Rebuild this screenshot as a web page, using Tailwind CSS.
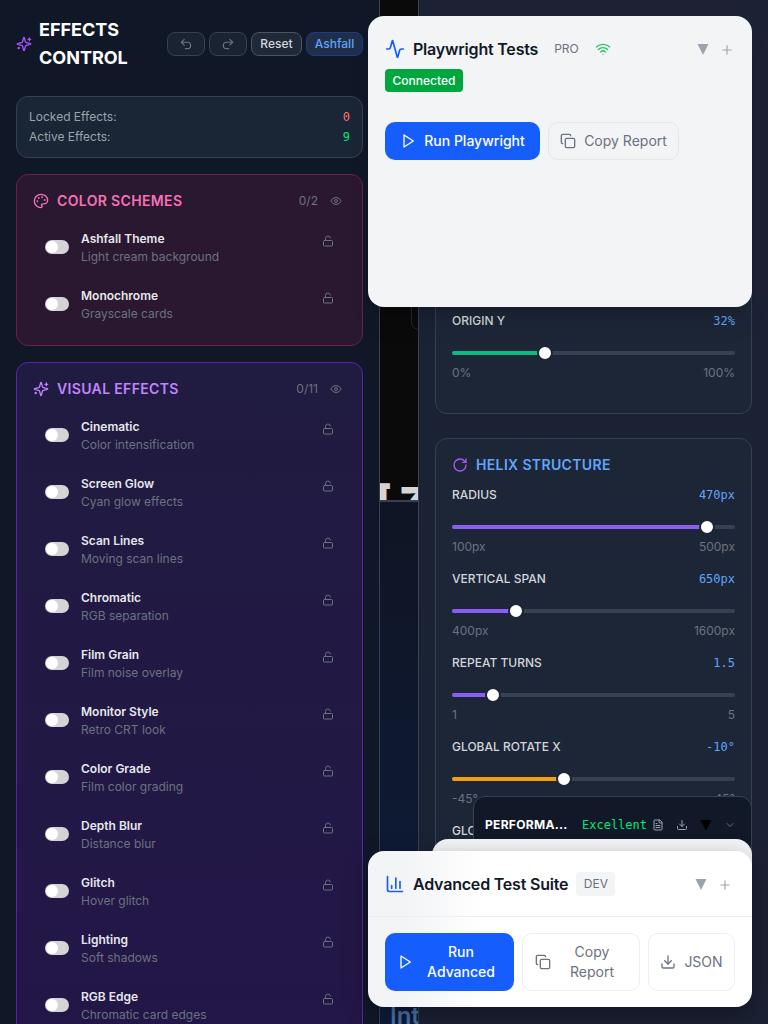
<!DOCTYPE html>
<html lang="en">
<head>
    <meta charset="UTF-8">
    <meta name="viewport" content="width=device-width, initial-scale=1.0">
    <title>Effects Control</title>
    <script src="https://cdn.jsdelivr.net/npm/@tailwindcss/browser@4"></script>
</head>
<body class="bg-[#0f172a] font-['Inter',sans-serif] antialiased">
<div class="relative flex h-[1024px] w-[768px] overflow-hidden">

    <!-- Effects sidebar -->
    <aside class="h-full w-[380px] shrink-0 overflow-hidden border-r border-[#374151] bg-[#101828] p-4 pr-4">
        <div class="mb-6 flex items-center justify-between">
            <div class="flex items-center gap-[7px]">
                <svg class="h-4 w-4 text-[#a855f7]" viewBox="0 0 24 24" fill="none" stroke="currentColor" stroke-width="2" stroke-linecap="round" stroke-linejoin="round"><path d="M9.937 15.5A2 2 0 0 0 8.5 14.063l-6.135-1.582a.5.5 0 0 1 0-.962L8.5 9.936A2 2 0 0 0 9.937 8.5l1.582-6.135a.5.5 0 0 1 .963 0L14.063 8.5A2 2 0 0 0 15.5 9.937l6.135 1.581a.5.5 0 0 1 0 .964L15.5 14.063a2 2 0 0 0-1.437 1.437l-1.582 6.135a.5.5 0 0 1-.963 0z"/><path d="M20 3v4"/><path d="M22 5h-4"/><path d="M4 17v2"/><path d="M5 18H3"/></svg>
                <h1 class="text-lg leading-7 font-bold text-white">EFFECTS<br>CONTROL</h1>
            </div>
            <div class="flex items-center gap-1">
                <button class="flex h-6 w-[38px] items-center justify-center rounded-lg border border-[#374151] bg-[#1a2332] text-[#6b7280]">
                    <svg class="h-[14px] w-[14px]" viewBox="0 0 24 24" fill="none" stroke="currentColor" stroke-width="2" stroke-linecap="round" stroke-linejoin="round"><path d="M9 14 4 9l5-5"/><path d="M4 9h10.5a5.5 5.5 0 0 1 5.5 5.5a5.5 5.5 0 0 1-5.5 5.5H11"/></svg>
                </button>
                <button class="flex h-6 w-[38px] items-center justify-center rounded-lg border border-[#374151] bg-[#1a2332] text-[#6b7280]">
                    <svg class="h-[14px] w-[14px]" viewBox="0 0 24 24" fill="none" stroke="currentColor" stroke-width="2" stroke-linecap="round" stroke-linejoin="round"><path d="m15 14 5-5-5-5"/><path d="M20 9H9.5A5.5 5.5 0 0 0 4 14.5A5.5 5.5 0 0 0 9.5 20H13"/></svg>
                </button>
                <button class="h-6 w-[51px] rounded-lg border border-[#4b5563] bg-[#1f2937] text-xs font-medium text-[#d1d5db]">Reset</button>
                <button class="h-6 w-[57px] rounded-lg border border-[#1e3a8a] bg-[#1f2f4a] text-xs font-medium text-[#60a5fa]">Ashfall</button>
            </div>
        </div>

        <div class="mb-4 rounded-xl border border-[#374151] bg-[#1a2535] px-3 py-[10px] text-xs leading-5 text-[#9ca3af]">
            <div class="flex justify-between"><span>Locked Effects:</span><span class="font-['DejaVu_Sans_Mono',monospace] text-[#f87171]">0</span></div>
            <div class="flex justify-between"><span>Active Effects:</span><span class="font-['DejaVu_Sans_Mono',monospace] text-[#00e676]">9</span></div>
        </div>

        <!-- Color schemes -->
        <section class="mb-4 rounded-xl border border-[#6b1d54] bg-[#2a1830] p-4 pb-2">
            <div class="flex h-5 items-center justify-between pr-1">
                <div class="flex items-center gap-2">
                    <svg class="h-4 w-4 text-[#f472b6]" viewBox="0 0 24 24" fill="none" stroke="currentColor" stroke-width="2" stroke-linecap="round" stroke-linejoin="round"><circle cx="13.5" cy="6.5" r=".5" fill="currentColor"/><circle cx="17.5" cy="10.5" r=".5" fill="currentColor"/><circle cx="8.5" cy="7.5" r=".5" fill="currentColor"/><circle cx="6.5" cy="12.5" r=".5" fill="currentColor"/><path d="M12 2C6.5 2 2 6.5 2 12s4.5 10 10 10c.926 0 1.648-.746 1.648-1.688 0-.437-.18-.835-.437-1.125-.29-.289-.438-.652-.438-1.125a1.64 1.64 0 0 1 1.668-1.668h1.996c3.051 0 5.555-2.503 5.555-5.554C21.965 6.012 17.461 2 12 2z"/></svg>
                    <h2 class="text-sm font-semibold tracking-wide text-[#f472b6]">COLOR SCHEMES</h2>
                </div>
                <div class="flex items-center gap-3 text-xs text-[#6b7280]">
                    <span>0/2</span>
                    <svg class="h-3 w-3" viewBox="0 0 24 24" fill="none" stroke="currentColor" stroke-width="2" stroke-linecap="round" stroke-linejoin="round"><path d="M2.062 12.348a1 1 0 0 1 0-.696 10.75 10.75 0 0 1 19.876 0 1 1 0 0 1 0 .696 10.75 10.75 0 0 1-19.876 0"/><circle cx="12" cy="12" r="3"/></svg>
                </div>
            </div>
            <div class="mt-3">
                <div class="flex h-[57px] items-start px-3 pt-2">
                    <span class="mt-[9px] mr-3 flex h-[14px] w-6 shrink-0 items-center rounded-full bg-[#d4d4d8] pl-[1px]"><span class="h-3 w-3 rounded-full bg-white"></span></span>
                    <div class="flex-1 text-xs leading-4"><p class="font-semibold text-[#e5e7eb]">Ashfall Theme</p><p class="mt-[2px] text-[#6b7280]">Light cream background</p></div>
                    <svg class="mt-1 h-3 w-3 text-[#6b7280]" viewBox="0 0 24 24" fill="none" stroke="currentColor" stroke-width="2" stroke-linecap="round" stroke-linejoin="round"><rect width="18" height="11" x="3" y="11" rx="2" ry="2"/><path d="M7 11V7a5 5 0 0 1 9.9-1"/></svg>
                </div>
                <div class="flex h-[57px] items-start px-3 pt-2">
                    <span class="mt-[9px] mr-3 flex h-[14px] w-6 shrink-0 items-center rounded-full bg-[#d4d4d8] pl-[1px]"><span class="h-3 w-3 rounded-full bg-white"></span></span>
                    <div class="flex-1 text-xs leading-4"><p class="font-semibold text-[#e5e7eb]">Monochrome</p><p class="mt-[2px] text-[#6b7280]">Grayscale cards</p></div>
                    <svg class="mt-1 h-3 w-3 text-[#6b7280]" viewBox="0 0 24 24" fill="none" stroke="currentColor" stroke-width="2" stroke-linecap="round" stroke-linejoin="round"><rect width="18" height="11" x="3" y="11" rx="2" ry="2"/><path d="M7 11V7a5 5 0 0 1 9.9-1"/></svg>
                </div>
            </div>
        </section>

        <!-- Visual effects -->
        <section class="rounded-xl border border-[#5b21b6] bg-gradient-to-b from-[#201b40] to-[#231648] p-4 pb-2">
            <div class="flex h-5 items-center justify-between pr-1">
                <div class="flex items-center gap-2">
                    <svg class="h-4 w-4 text-[#c084fc]" viewBox="0 0 24 24" fill="none" stroke="currentColor" stroke-width="2" stroke-linecap="round" stroke-linejoin="round"><path d="M9.937 15.5A2 2 0 0 0 8.5 14.063l-6.135-1.582a.5.5 0 0 1 0-.962L8.5 9.936A2 2 0 0 0 9.937 8.5l1.582-6.135a.5.5 0 0 1 .963 0L14.063 8.5A2 2 0 0 0 15.5 9.937l6.135 1.581a.5.5 0 0 1 0 .964L15.5 14.063a2 2 0 0 0-1.437 1.437l-1.582 6.135a.5.5 0 0 1-.963 0z"/><path d="M20 3v4"/><path d="M22 5h-4"/><path d="M4 17v2"/><path d="M5 18H3"/></svg>
                    <h2 class="text-sm font-semibold tracking-wide text-[#c084fc]">VISUAL EFFECTS</h2>
                </div>
                <div class="flex items-center gap-3 text-xs text-[#6b7280]">
                    <span>0/11</span>
                    <svg class="h-3 w-3" viewBox="0 0 24 24" fill="none" stroke="currentColor" stroke-width="2" stroke-linecap="round" stroke-linejoin="round"><path d="M2.062 12.348a1 1 0 0 1 0-.696 10.75 10.75 0 0 1 19.876 0 1 1 0 0 1 0 .696 10.75 10.75 0 0 1-19.876 0"/><circle cx="12" cy="12" r="3"/></svg>
                </div>
            </div>
            <div class="mt-3" id="visual-rows"></div>
        </section>
    </aside>

    <!-- Canvas strip -->
    <main class="relative flex h-full w-[39px] shrink-0 flex-col overflow-hidden border-r border-[#374151] bg-gradient-to-b from-[#111a30] via-[#0f1524] to-[#0d1c3c]">
        <div class="relative h-[502px] shrink-0 overflow-hidden border-b-2 border-[#374151] bg-[#0a0a0a]">
            <span class="absolute top-[482px] left-[-4px] text-[40px] leading-none font-black whitespace-nowrap text-[#d4d4d4]">[ Z</span>
            <div class="absolute top-[280px] left-[31px] h-[50px] w-10 rounded-lg border border-[#1f2937]"></div>
        </div>
        <span class="absolute top-[1000px] left-[10px] text-2xl font-semibold text-[#5f8fc4]/80">Intl</span>
    </main>

    <!-- Settings column -->
    <aside class="h-full flex-1 overflow-hidden bg-[#1a2234] px-4 pt-6">
        <section class="mb-6 flex h-[390px] flex-col justify-end rounded-xl border border-[#334155] bg-[#1d2637] p-4 pb-[32px]">
            <div class="flex justify-between text-xs leading-4 font-medium"><span class="text-[#d1d5db]">ORIGIN Y</span><span class="font-['DejaVu_Sans_Mono',monospace] text-[#60a5fa]">32%</span></div>
            <div class="relative mt-4 flex h-4 items-center">
                <div class="h-1 w-full rounded-full bg-[#374151]"><div class="h-1 w-[93px] rounded-full bg-[#10b981]"></div></div>
                <span class="absolute left-[85px] h-4 w-4 rounded-full border-2 border-[#1d2637] bg-white"></span>
            </div>
            <div class="mt-1 flex justify-between text-xs leading-4 text-[#6b7280]"><span>0%</span><span>100%</span></div>
        </section>

        <section class="rounded-xl border border-[#334155] bg-[#1d2637] p-4">
            <div class="flex h-5 items-center gap-2">
                <svg class="h-4 w-4 text-[#a855f7]" viewBox="0 0 24 24" fill="none" stroke="currentColor" stroke-width="2" stroke-linecap="round" stroke-linejoin="round"><path d="M21 12a9 9 0 1 1-9-9c2.52 0 4.93 1 6.74 2.74L21 8"/><path d="M21 3v5h-5"/></svg>
                <h2 class="text-sm font-semibold tracking-wide text-[#60a5fa]">HELIX STRUCTURE</h2>
            </div>
            <div class="mt-3 mb-4">
                <div class="flex justify-between text-xs leading-4 font-medium"><span class="text-[#d1d5db]">RADIUS</span><span class="font-['DejaVu_Sans_Mono',monospace] text-[#60a5fa]">470px</span></div>
                <div class="relative mt-4 flex h-4 items-center">
                    <div class="h-1 w-full rounded-full bg-[#374151]"><div class="h-1 w-[255px] rounded-full bg-[#8b5cf6]"></div></div>
                    <span class="absolute left-[247px] h-4 w-4 rounded-full border-2 border-[#1d2637] bg-white"></span>
                </div>
                <div class="mt-1 flex justify-between text-xs leading-4 text-[#6b7280]"><span>100px</span><span>500px</span></div>
            </div>
            <div class="mb-4">
                <div class="flex justify-between text-xs leading-4 font-medium"><span class="text-[#d1d5db]">VERTICAL SPAN</span><span class="font-['DejaVu_Sans_Mono',monospace] text-[#60a5fa]">650px</span></div>
                <div class="relative mt-4 flex h-4 items-center">
                    <div class="h-1 w-full rounded-full bg-[#374151]"><div class="h-1 w-[64px] rounded-full bg-[#8b5cf6]"></div></div>
                    <span class="absolute left-[56px] h-4 w-4 rounded-full border-2 border-[#1d2637] bg-white"></span>
                </div>
                <div class="mt-1 flex justify-between text-xs leading-4 text-[#6b7280]"><span>400px</span><span>1600px</span></div>
            </div>
            <div class="mb-4">
                <div class="flex justify-between text-xs leading-4 font-medium"><span class="text-[#d1d5db]">REPEAT TURNS</span><span class="font-['DejaVu_Sans_Mono',monospace] text-[#60a5fa]">1.5</span></div>
                <div class="relative mt-4 flex h-4 items-center">
                    <div class="h-1 w-full rounded-full bg-[#374151]"><div class="h-1 w-[41px] rounded-full bg-[#8b5cf6]"></div></div>
                    <span class="absolute left-[33px] h-4 w-4 rounded-full border-2 border-[#1d2637] bg-white"></span>
                </div>
                <div class="mt-1 flex justify-between text-xs leading-4 text-[#6b7280]"><span>1</span><span>5</span></div>
            </div>
            <div class="mb-4">
                <div class="flex justify-between text-xs leading-4 font-medium"><span class="text-[#d1d5db]">GLOBAL ROTATE X</span><span class="font-['DejaVu_Sans_Mono',monospace] text-[#60a5fa]">-10°</span></div>
                <div class="relative mt-4 flex h-4 items-center">
                    <div class="h-1 w-full rounded-full bg-[#374151]"><div class="h-1 w-[112px] rounded-full bg-[#f59e0b]"></div></div>
                    <span class="absolute left-[104px] h-4 w-4 rounded-full border-2 border-[#1d2637] bg-white"></span>
                </div>
                <div class="mt-1 flex justify-between text-xs leading-4 text-[#6b7280]"><span>-45°</span><span>45°</span></div>
            </div>
            <div class="text-xs leading-4 font-medium text-[#d1d5db]">GLOBAL ROTATE Y</div>
        </section>
    </aside>

    <!-- Playwright panel -->
    <div class="absolute top-4 left-[368px] h-[291px] w-[384px] rounded-2xl bg-[#f3f4f6] p-[17px] shadow-xl">
        <div class="flex h-8 items-center">
            <svg class="h-5 w-5 text-[#155dfc]" viewBox="0 0 24 24" fill="none" stroke="currentColor" stroke-width="2" stroke-linecap="round" stroke-linejoin="round"><path d="M22 12h-2.48a2 2 0 0 0-1.93 1.46l-2.35 8.36a.25.25 0 0 1-.48 0L9.24 2.18a.25.25 0 0 0-.48 0l-2.35 8.36A2 2 0 0 1 4.49 12H2"/></svg>
            <h2 class="ml-[8px] text-base font-semibold tracking-[-0.2px] text-[#111827]">Playwright Tests</h2>
            <span class="ml-4 text-xs text-[#6b7280]">PRO</span>
            <svg class="ml-4 h-4 w-4 text-[#22c55e]" viewBox="0 0 24 24" fill="none" stroke="currentColor" stroke-width="2" stroke-linecap="round" stroke-linejoin="round"><path d="M12 20h.01"/><path d="M2 8.82a15 15 0 0 1 20 0"/><path d="M5 12.859a10 10 0 0 1 14 0"/><path d="M8.5 16.429a5 5 0 0 1 7 0"/></svg>
            <svg class="ml-auto h-3 w-3 text-[#9ca3af]" viewBox="0 0 12 12" fill="currentColor"><polygon points="0.5,1 11.5,1 6,12"/></svg>
            <svg class="mt-[2px] mr-[1px] ml-[11px] h-[14px] w-[14px] text-[#9ca3af]" viewBox="0 0 24 24" fill="none" stroke="currentColor" stroke-width="2" stroke-linecap="round"><path d="M5 12h14"/><path d="M12 5v14"/></svg>
        </div>
        <span class="mt-[4px] inline-flex h-[23px] w-[78px] items-center justify-center rounded bg-[#00a63e] text-xs font-medium text-white">Connected</span>
        <div class="mt-[30px] flex gap-2">
            <button class="flex h-[38px] w-[155px] items-center justify-center gap-2 rounded-[10px] bg-[#155dfc] text-sm font-medium text-white">
                <svg class="h-4 w-4" viewBox="0 0 24 24" fill="none" stroke="currentColor" stroke-width="2" stroke-linecap="round" stroke-linejoin="round"><polygon points="6 3 20 12 6 21 6 3"/></svg>
                Run Playwright
            </button>
            <button class="flex h-[38px] w-[131px] items-center justify-center gap-2 rounded-[10px] border border-[#e5e7eb] text-sm text-[#6b7280]">
                <svg class="h-4 w-4" viewBox="0 0 24 24" fill="none" stroke="currentColor" stroke-width="2" stroke-linecap="round" stroke-linejoin="round"><rect width="14" height="14" x="8" y="8" rx="2" ry="2"/><path d="M4 16c-1.1 0-2-.9-2-2V4c0-1.1.9-2 2-2h10c1.1 0 2 .9 2 2"/></svg>
                Copy Report
            </button>
        </div>
    </div>

    <!-- Performance panel -->
    <div class="absolute top-[796px] left-[473px] flex h-[60px] w-[279px] items-start rounded-t-xl border border-[#374151] bg-[#111827] px-[11px] pt-[20px]">
        <span class="w-[81px] text-xs leading-4 font-bold tracking-[0.3px] whitespace-nowrap text-white">PERFORMA...</span>
        <span class="ml-4 font-['DejaVu_Sans_Mono',monospace] text-xs leading-4 text-[#00e676]">Excellent</span>
        <svg class="mt-[2px] ml-[5px] h-3 w-3 text-[#9ca3af]" viewBox="0 0 24 24" fill="none" stroke="currentColor" stroke-width="2" stroke-linecap="round" stroke-linejoin="round"><path d="M15 2H6a2 2 0 0 0-2 2v16a2 2 0 0 0 2 2h12a2 2 0 0 0 2-2V7Z"/><path d="M14 2v4a2 2 0 0 0 2 2h4"/><path d="M10 9H8"/><path d="M16 13H8"/><path d="M16 17H8"/></svg>
        <svg class="mt-[2px] ml-3 h-3 w-3 text-[#9ca3af]" viewBox="0 0 24 24" fill="none" stroke="currentColor" stroke-width="2" stroke-linecap="round" stroke-linejoin="round"><path d="M21 15v4a2 2 0 0 1-2 2H5a2 2 0 0 1-2-2v-4"/><polyline points="7 10 12 15 17 10"/><line x1="12" x2="12" y1="15" y2="3"/></svg>
        <svg class="mt-[2px] ml-3 h-3 w-3 text-black" viewBox="0 0 12 12" fill="currentColor"><polygon points="0.5,1 11.5,1 6,12"/></svg>
        <svg class="mt-[2px] ml-3 h-3 w-3 text-[#6b7280]" viewBox="0 0 24 24" fill="none" stroke="currentColor" stroke-width="2" stroke-linecap="round" stroke-linejoin="round"><path d="m6 9 6 6 6-6"/></svg>
    </div>

    <!-- Panel stacked behind the test suite -->
    <div class="absolute top-[839px] left-[432px] h-[160px] w-[320px] rounded-2xl bg-[#f3f4f6]"></div>

    <!-- Advanced test suite panel -->
    <div class="absolute top-[851px] left-[368px] h-[156px] w-[384px] rounded-2xl bg-gradient-to-r from-[#f3f4f6] from-[10%] to-white to-[30%] shadow-[0_8px_24px_rgba(0,0,0,0.35)]">
        <div class="flex h-[66px] items-center border-b border-[#eceef1] pr-[20px] pl-[17px]">
            <svg class="h-5 w-5 text-[#155dfc]" viewBox="0 0 24 24" fill="none" stroke="currentColor" stroke-width="2" stroke-linecap="round" stroke-linejoin="round"><path d="M3 3v16a2 2 0 0 0 2 2h16"/><path d="M18 17V9"/><path d="M13 17V5"/><path d="M8 17v-3"/></svg>
            <h2 class="ml-[8px] text-base font-semibold tracking-[-0.2px] text-[#111827]">Advanced Test Suite</h2>
            <span class="ml-2 flex h-6 w-[39px] items-center justify-center rounded bg-[#f3f4f6] text-xs text-[#6b7280]">DEV</span>
            <svg class="ml-auto h-3 w-3 text-[#9ca3af]" viewBox="0 0 12 12" fill="currentColor"><polygon points="0.5,1 11.5,1 6,12"/></svg>
            <svg class="mt-[2px] ml-[11px] h-[14px] w-[14px] text-[#9ca3af]" viewBox="0 0 24 24" fill="none" stroke="currentColor" stroke-width="2" stroke-linecap="round"><path d="M5 12h14"/><path d="M12 5v14"/></svg>
        </div>
        <div class="mt-4 flex gap-2 px-[17px]">
            <button class="flex h-[58px] w-[129px] items-center rounded-[10px] bg-[#155dfc] px-3 text-sm leading-5 font-medium text-white">
                <svg class="h-4 w-4 shrink-0" viewBox="0 0 24 24" fill="none" stroke="currentColor" stroke-width="2" stroke-linecap="round" stroke-linejoin="round"><polygon points="6 3 20 12 6 21 6 3"/></svg>
                <span class="ml-[7px] flex-1 text-center">Run<br>Advanced</span>
            </button>
            <button class="flex h-[58px] w-[118px] items-center rounded-[10px] border border-[#eceef1] px-3 text-sm leading-5 text-[#6b7280]">
                <svg class="h-4 w-4 shrink-0" viewBox="0 0 24 24" fill="none" stroke="currentColor" stroke-width="2" stroke-linecap="round" stroke-linejoin="round"><rect width="14" height="14" x="8" y="8" rx="2" ry="2"/><path d="M4 16c-1.1 0-2-.9-2-2V4c0-1.1.9-2 2-2h10c1.1 0 2 .9 2 2"/></svg>
                <span class="ml-[6px] flex-1 text-center">Copy<br>Report</span>
            </button>
            <button class="flex h-[58px] w-[87px] items-center justify-center gap-2 rounded-[10px] border border-[#eceef1] text-sm text-[#6b7280]">
                <svg class="h-4 w-4 shrink-0" viewBox="0 0 24 24" fill="none" stroke="currentColor" stroke-width="2" stroke-linecap="round" stroke-linejoin="round"><path d="M21 15v4a2 2 0 0 1-2 2H5a2 2 0 0 1-2-2v-4"/><polyline points="7 10 12 15 17 10"/><line x1="12" x2="12" y1="15" y2="3"/></svg>
                JSON
            </button>
        </div>
    </div>
</div>

<script>
    // Rows of the Visual Effects card
    const visualEffects = [
        ['Cinematic', 'Color intensification'],
        ['Screen Glow', 'Cyan glow effects'],
        ['Scan Lines', 'Moving scan lines'],
        ['Chromatic', 'RGB separation'],
        ['Film Grain', 'Film noise overlay'],
        ['Monitor Style', 'Retro CRT look'],
        ['Color Grade', 'Film color grading'],
        ['Depth Blur', 'Distance blur'],
        ['Glitch', 'Hover glitch'],
        ['Lighting', 'Soft shadows'],
        ['RGB Edge', 'Chromatic card edges']
    ];

    document.getElementById('visual-rows').innerHTML = visualEffects.map(([name, desc]) => `
        <div class="flex h-[57px] items-start px-3 pt-2">
            <span class="mt-[9px] mr-3 flex h-[14px] w-6 shrink-0 items-center rounded-full bg-[#d4d4d8] pl-[1px]"><span class="h-3 w-3 rounded-full bg-white"></span></span>
            <div class="flex-1 text-xs leading-4"><p class="font-semibold text-[#e5e7eb]">${name}</p><p class="mt-[2px] text-[#6b7280]">${desc}</p></div>
            <svg class="mt-1 h-3 w-3 text-[#6b7280]" viewBox="0 0 24 24" fill="none" stroke="currentColor" stroke-width="2" stroke-linecap="round" stroke-linejoin="round"><rect width="18" height="11" x="3" y="11" rx="2" ry="2"/><path d="M7 11V7a5 5 0 0 1 9.9-1"/></svg>
        </div>`).join('');
</script>
</body>
</html>
